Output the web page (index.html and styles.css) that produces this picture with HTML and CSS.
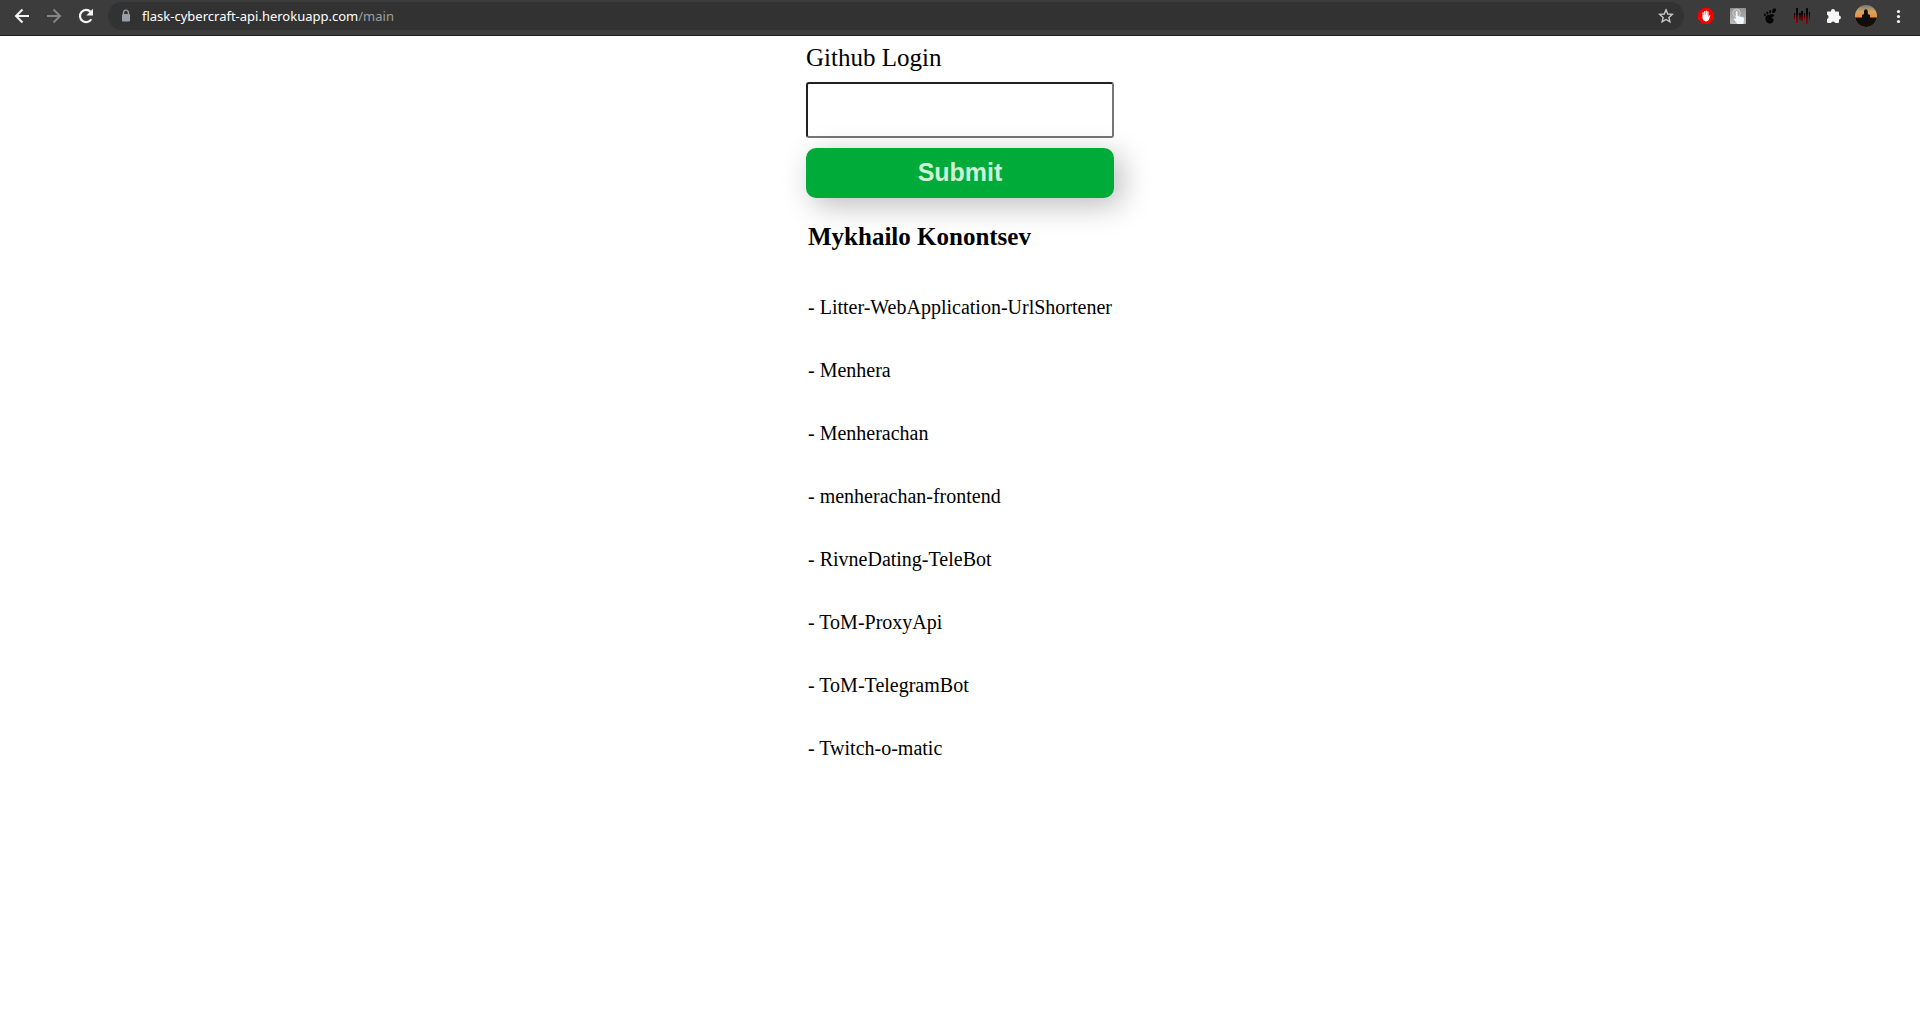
FILE: index.html
```html
<!DOCTYPE html>
<html lang="en">
<head>
<meta charset="utf-8">
<meta name="viewport" content="width=device-width, initial-scale=1">
<title>Github Login</title>
<link rel="stylesheet" href="styles.css">
</head>
<body>
<header class="toolbar">
  <button class="tool" type="button" aria-label="Back"><svg width="20" height="20" viewBox="0 0 20 20" fill="none" stroke="#f4f4f4" stroke-width="2"><path d="M17 10H4.500M10.500 3.500L4 10l6.500 6.500"/></svg></button>
  <button class="tool" type="button" aria-label="Forward"><svg width="20" height="20" viewBox="0 0 20 20" fill="none" stroke="#858585" stroke-width="2"><path d="M3 10h12.500M9.500 3.500L16 10l-6.500 6.500"/></svg></button>
  <button class="tool" type="button" aria-label="Reload"><svg width="20" height="20" viewBox="0 0 20 20"><path d="M15.300 13.200A6.100 6.100 0 1 1 14.500 5.800" fill="none" stroke="#f4f4f4" stroke-width="2.200"/><path d="M17 2.800v6.700h-6.700z" fill="#f4f4f4"/></svg></button>
  <div class="omnibox">
    <svg class="lock" width="16" height="16" viewBox="0 0 16 16"><path d="M5.500 7V5a2.500 2.800 0 0 1 5 0v2" fill="none" stroke="#9aa0a6" stroke-width="1.300"/><rect x="4" y="6" width="8" height="7.500" rx="1" fill="#9aa0a6"/></svg>
    <div class="url"><span class="host">flask-cybercraft-api.herokuapp.com</span>/main</div>
    <button class="tool" type="button" aria-label="Bookmark this page"><svg width="16" height="16" viewBox="0 0 16 16"><path d="M8 1.900l1.800 4.100 4.500.400-3.400 3 1 4.400L8 11.500l-3.900 2.300 1-4.400-3.400-3 4.500-.400z" fill="none" stroke="#c8c8c8" stroke-width="1.400"/></svg></button>
  </div>
  <button class="tool" type="button" aria-label="Ad blocker"><svg width="16" height="16" viewBox="0 0 16 16"><path d="M4.700 0h6.600L16 4.700v6.600L11.300 16H4.700L0 11.300V4.700z" fill="#f40000"/><path d="M4.500 8V4.600q.600-.700 1.200 0V7l.400-.100V3.300q.600-.700 1.200 0V6.800h.400V2.800q.600-.700 1.200 0v4h.400V3.600q.600-.700 1.200 0v5.100l.800-1.300q.800-.500 1.100.200L10.800 12q-1.200 1.700-3.600 1.300-2.500-.500-2.700-3z" fill="#fff"/></svg></button>
  <button class="tool" type="button" aria-label="Click tool"><svg width="16" height="16" viewBox="0 0 16 16"><defs><linearGradient id="tile" x1="0" y1="0" x2="0" y2="1"><stop offset="0" stop-color="#929292"/><stop offset="1" stop-color="#bcbcbc"/></linearGradient></defs><rect width="16" height="16" rx="1" fill="url(#tile)"/><circle cx="6.500" cy="5" r="3.800" fill="#aaa" stroke="#cfcfcf"/><path d="M5.800 3.500q1-1 1.800 0V8l5.500 1.200q1.300.500 1.100 2L13.300 16H7.500L3.600 11q.600-1.400 2.200-.100z" fill="#f1f7fc"/></svg></button>
  <button class="tool" type="button" aria-label="Gnome extensions"><svg width="16" height="16" viewBox="0 0 16 16" fill="#050505"><path d="M9 6.300c3.500-.700 4.400 1.800 1.600 2.500-1.500.400-1.500 1.200-.200 1.500 2.200.500 1.500 5.200-2.400 5.200-3 0-5-3-4.500-5.800.400-2 2.900-3.100 5.500-3.400z"/><ellipse cx="12" cy="2.700" rx="1.700" ry="2.500" transform="rotate(28 12 2.700)"/><ellipse cx="8.200" cy="3.600" rx="1.100" ry="1.700" transform="rotate(10 8.200 3.600)"/><ellipse cx="5.300" cy="4.900" rx="1" ry="1.500" transform="rotate(-15 5.300 4.900)"/><ellipse cx="2.900" cy="6.900" rx=".900" ry="1.400" transform="rotate(-25 2.900 6.900)"/></svg></button>
  <button class="tool" type="button" aria-label="Audio tool"><svg width="16" height="16" viewBox="0 0 16 16"><defs><linearGradient id="wave" x1="0" y1="0" x2="0" y2="16" gradientUnits="userSpaceOnUse"><stop offset=".35" stop-color="#080808"/><stop offset=".6" stop-color="#600606"/><stop offset="1" stop-color="#900808"/></linearGradient></defs><path d="M0 5h1v6H0zM2 0h2v15H2zM5 5h2v7H5zM7 3h2v10H7zM10 5h1v6h-1zM12 0h2v16h-2zM15 4h1v8h-1z" fill="url(#wave)"/></svg></button>
  <button class="tool" type="button" aria-label="Extensions"><svg width="16" height="16" viewBox="0 0 16 16"><path d="M1.500 3.500h3.600a2 2 0 1 1 3.800 0H12a1 1 0 0 1 1 1v3.100a1.900 1.900 0 1 1 0 3.800V14a1 1 0 0 1-1 1H9.200a2.200 2.200 0 0 0-4.200 0H2a1 1 0 0 1-1-1v-3a2.200 2.200 0 0 0 0-4.200V4z" fill="#f6f6f6"/></svg></button>
  <button class="tool" type="button" aria-label="Profile"><svg width="22" height="22" viewBox="0 0 22 22"><defs><linearGradient id="sunset" x1="0" y1="0" x2="0" y2="1"><stop offset="0" stop-color="#77786f"/><stop offset=".3" stop-color="#d3a566"/><stop offset=".6" stop-color="#f58a2c"/></linearGradient><clipPath id="disc"><circle cx="11" cy="11" r="11"/></clipPath></defs><g clip-path="url(#disc)"><path d="M0 0h22v22H0z" fill="url(#sunset)"/><path d="M0 12.500h7V10l2-1V6.500a1.900 2.300 0 0 1 3.800 0V9l2.200 1v2.500h7V22H0z" fill="#100f0b"/></g></svg></button>
  <button class="tool" type="button" aria-label="Menu"><svg width="16" height="16" viewBox="0 0 16 16" fill="#f4f4f4"><circle cx="8.500" cy="3.500" r="1.600"/><circle cx="8.500" cy="8.500" r="1.600"/><circle cx="8.500" cy="13.500" r="1.600"/></svg></button>
</header>
<main class="content">
  <form class="login">
    <label for="login">Github Login</label>
    <input class="field" id="login" name="login" type="text">
    <button class="submit" type="submit">Submit</button>
  </form>
  <section class="result">
    <h1 class="name">Mykhailo Konontsev</h1>
    <ul class="repos">
      <li>- Litter-WebApplication-UrlShortener</li>
      <li>- Menhera</li>
      <li>- Menherachan</li>
      <li>- menherachan-frontend</li>
      <li>- RivneDating-TeleBot</li>
      <li>- ToM-ProxyApi</li>
      <li>- ToM-TelegramBot</li>
      <li>- Twitch-o-matic</li>
    </ul>
  </section>
</main>
</body>
</html>
```

FILE: styles.css
```css
* {
  box-sizing: border-box;
}

body {
  margin: 0;
  background: #fff;
  color: #000;
  font-family: "Liberation Serif", "Times New Roman", serif;
}

.toolbar {
  display: flex;
  align-items: center;
  padding: 2px 6px 5px;
  background: #3c3c3c;
  border-bottom: 1px solid #1f1f1f;
}

.tool {
  display: flex;
  flex: none;
  align-items: center;
  justify-content: center;
  width: 32px;
  height: 28px;
  padding: 0;
  border: 0;
  background: none;
}

.omnibox {
  display: flex;
  flex: 1;
  align-items: center;
  min-width: 0;
  margin: 0 6px;
  padding: 0 2px 0 10px;
  border-radius: 14px;
  background: #323232;
}

.lock {
  flex: none;
  margin-right: 8px;
}

.url {
  flex: 1;
  overflow: hidden;
  color: #9aa0a6;
  font: 13px/20px "Noto Sans", "Open Sans", sans-serif;
  white-space: nowrap;
}

.host {
  color: #fff;
}

.content {
  display: flex;
  flex-direction: column;
  width: 308px;
  max-width: 100%;
  margin: 0 auto;
  padding: 8px 0;
}

.login {
  display: flex;
  flex-direction: column;
  font-size: 25px;
  line-height: 28px;
}

.field {
  width: 100%;
  height: 56px;
  margin: 10px 0;
  padding: 0 8px;
  border: 2px inset #767676;
  border-radius: 3px;
  background: #fff;
  font: 25px "Liberation Sans", Arial, sans-serif;
}

.submit {
  height: 50px;
  padding: 0 0 2px;
  border: 0;
  border-radius: 10px;
  background: #00ab39;
  box-shadow: 7px 7px 30px rgba(0, 0, 0, 0.27);
  color: #ccf2d8;
  font: bold 25px "Liberation Sans", Arial, sans-serif;
}

.result {
  padding: 24px 2px 0;
}

.name {
  margin: 0 0 45px;
  font-size: 25px;
  line-height: 29px;
}

.repos {
  display: flex;
  flex-direction: column;
  gap: 40px;
  margin: 0;
  padding: 0;
  font-size: 20px;
  line-height: 23px;
  list-style: none;
}
```
